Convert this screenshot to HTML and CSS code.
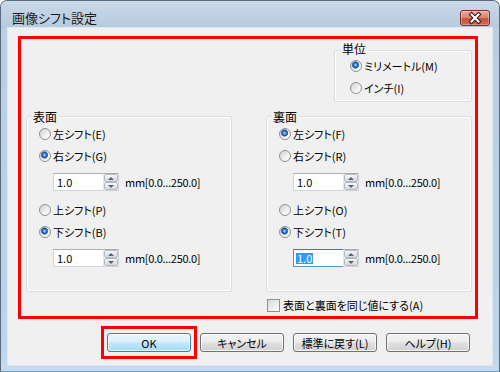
FILE: index.html
```html
<!DOCTYPE html>
<html lang="ja">
<head>
<meta charset="utf-8">
<link rel="stylesheet" href="styles.css">
</head>
<body>
<div class="window">
  <div class="titlebar">
    <span class="title">画像シフト設定</span>
    <span class="close">
      <svg width="28" height="14" viewBox="0 0 28 14">
        <path d="M10.5 3.5L17.5 10.5M17.5 3.5L10.5 10.5" stroke="#3b1b16" stroke-width="4.2" stroke-linecap="square" fill="none"/>
        <path d="M10.5 3.5L17.5 10.5M17.5 3.5L10.5 10.5" stroke="#ffffff" stroke-width="2" stroke-linecap="square" fill="none"/>
      </svg>
    </span>
  </div>
  <div class="client">
    <div class="highlight">
      <div class="group unit">
        <span class="gtitle">単位</span>
        <div class="row"><span class="radio on"></span><span>ミリメートル(M)</span></div>
        <div class="row"><span class="radio"></span><span>インチ(I)</span></div>
      </div>

      <div class="group side front">
        <span class="gtitle">表面</span>
        <div class="row"><span class="radio"></span><span>左シフト(E)</span></div>
        <div class="row"><span class="radio on"></span><span>右シフト(G)</span></div>
        <div class="spin-row">
          <div class="spin">
            <span class="spin-input">1.0</span>
            <span class="spin-btns"><span class="spin-btn"><span class="tri-up"></span></span><span class="spin-btn"><span class="tri-down"></span></span></span>
          </div>
          <span class="range">mm[0.0...250.0]</span>
        </div>
        <div class="row sep"><span class="radio"></span><span>上シフト(P)</span></div>
        <div class="row"><span class="radio on"></span><span>下シフト(B)</span></div>
        <div class="spin-row">
          <div class="spin">
            <span class="spin-input">1.0</span>
            <span class="spin-btns"><span class="spin-btn"><span class="tri-up"></span></span><span class="spin-btn"><span class="tri-down"></span></span></span>
          </div>
          <span class="range">mm[0.0...250.0]</span>
        </div>
      </div>

      <div class="group side back">
        <span class="gtitle">裏面</span>
        <div class="row"><span class="radio on"></span><span>左シフト(F)</span></div>
        <div class="row"><span class="radio"></span><span>右シフト(R)</span></div>
        <div class="spin-row">
          <div class="spin">
            <span class="spin-input">1.0</span>
            <span class="spin-btns"><span class="spin-btn"><span class="tri-up"></span></span><span class="spin-btn"><span class="tri-down"></span></span></span>
          </div>
          <span class="range">mm[0.0...250.0]</span>
        </div>
        <div class="row sep"><span class="radio"></span><span>上シフト(O)</span></div>
        <div class="row"><span class="radio on"></span><span>下シフト(T)</span></div>
        <div class="spin-row">
          <div class="spin">
            <span class="spin-input focus"><span class="sel">1.0</span></span>
            <span class="spin-btns"><span class="spin-btn"><span class="tri-up"></span></span><span class="spin-btn"><span class="tri-down"></span></span></span>
          </div>
          <span class="range">mm[0.0...250.0]</span>
        </div>
      </div>

      <div class="check-row"><span class="checkbox"></span><span>表面と裏面を同じ値にする(A)</span></div>
    </div>

    <div class="buttons">
      <div class="ok-frame"><span class="btn default">OK</span></div>
      <span class="btn">キャンセル</span>
      <span class="btn spaced">標準に戻す(L)</span>
      <span class="btn spaced">ヘルプ(H)</span>
    </div>
  </div>
</div>
</body>
</html>
```

FILE: styles.css
```css
html, body {
  margin: 0;
  padding: 0;
}
body {
  width: 500px;
  height: 372px;
  overflow: hidden;
  background: #ffffff;
  font-family: "Noto Sans CJK JP", "Noto Sans", sans-serif;
  font-size: 11px;
  line-height: 16px;
  font-feature-settings: "palt";
  color: #000;
}

.window {
  width: 500px;
  height: 372px;
  box-sizing: border-box;
  border: 1px solid #596a7d;
  border-bottom-color: #5fa6cf;
  border-radius: 7px 7px 0 0;
  background: linear-gradient(#c4d5e7, #b9cee4 40px, #bcd4ec 340px, #c3daf0);
  display: flex;
  flex-direction: column;
  overflow: hidden;
}

.titlebar {
  height: 27px;
  box-sizing: border-box;
  display: flex;
  align-items: flex-start;
  padding: 9px 9px 0 11px;
  background: linear-gradient(#cbd9e8, #b6cadf);
}
.title {
  font-size: 13px;
  line-height: 16px;
  color: #1b1b1b;
}
.close {
  margin-left: auto;
  width: 30px;
  height: 16px;
  box-sizing: border-box;
  border: 1px solid #7d2d24;
  border-radius: 3px;
  background: linear-gradient(#e8ab9d 0%, #d98a78 45%, #c5533f 55%, #cd6a55 100%);
  box-shadow: inset 0 0 0 1px rgba(255, 255, 255, 0.3);
  display: flex;
}
.close svg {
  display: block;
}

.client {
  flex: 1;
  margin: 0 7px 6px;
  background: #f0f0f0;
  padding: 8px 14px 0 10px;
  box-shadow: 0 0 0 1px #dfe7ef;
}

.highlight {
  border: 3px solid #ff0000;
  display: grid;
  grid-template-columns: 206px 206px;
  column-gap: 34px;
  padding: 11px 3px 0 5px;
}

.group {
  border: 1px solid #d5dfe5;
  border-radius: 3px;
  box-shadow: inset 0 0 0 1px #ffffff;
}
.gtitle {
  display: block;
  width: fit-content;
  margin: -8px 0 0 4px;
  padding: 0 2px;
  font-size: 12px;
  line-height: 12px;
  background: #f0f0f0;
}

.unit {
  grid-column: 2;
  justify-self: end;
  width: 138px;
  box-sizing: border-box;
  padding-bottom: 2px;
  margin-bottom: 14px;
}
.unit .gtitle {
  margin-left: 5px;
}
.unit .row {
  padding-left: 15px;
}

.side {
  padding: 2px 0 24px;
}
.front { grid-column: 1; }
.back { grid-column: 2; }

.row {
  display: flex;
  align-items: center;
  height: 22px;
  padding-left: 12px;
}
.row.sep {
  margin-top: 8px;
}

.radio {
  width: 12px;
  height: 12px;
  box-sizing: border-box;
  border-radius: 50%;
  border: 1px solid #8f8f8f;
  background: linear-gradient(135deg, #d2d2d2, #f6f6f6 70%, #ffffff);
  margin-right: 2px;
  flex: none;
}
.radio.on {
  background:
    radial-gradient(circle at 45% 40%, #bfe6ff 0, #3d8fdc 1.4px, #1c4f9a 2.8px, #4f86c8 3.4px, rgba(255,255,255,0) 3.9px),
    linear-gradient(135deg, #d2d2d2, #f6f6f6 70%, #ffffff);
}

.spin-row {
  display: flex;
  align-items: center;
  height: 18px;
  margin-top: 6px;
  padding-left: 26px;
}
.spin {
  display: flex;
  height: 18px;
}
.spin-input {
  width: 50px;
  height: 18px;
  box-sizing: border-box;
  background: #ffffff;
  border: 1px solid #d0d3d9;
  border-top-color: #abadb3;
  border-right: none;
  padding-left: 3px;
  line-height: 16px;
  display: flex;
  align-items: center;
}
.spin-input.focus {
  border-color: #5593c9;
  border-top-color: #3d7bad;
}
.sel {
  background: #3399ff;
  color: #ffffff;
  line-height: 11px;
  padding: 0 1px;
  margin-left: -1px;
}
.spin-btns {
  width: 16px;
  height: 18px;
  box-sizing: border-box;
  border: 1px solid #d0d3d9;
  border-top-color: #abadb3;
  border-left: 1px solid #e4e4e4;
  background: #ffffff;
  display: flex;
  flex-direction: column;
  padding: 0;
}
.spin-btn {
  flex: 1;
  border: 1px solid #b5b8c0;
  border-radius: 2px;
  background: linear-gradient(#f8f8f8, #e6e6e6 50%, #d9dbe0);
  display: flex;
  align-items: center;
  justify-content: center;
}
.tri-up {
  width: 0;
  height: 0;
  border-left: 3px solid transparent;
  border-right: 3px solid transparent;
  border-bottom: 3px solid #4d6488;
}
.tri-down {
  width: 0;
  height: 0;
  border-left: 3px solid transparent;
  border-right: 3px solid transparent;
  border-top: 3px solid #4d6488;
}
.range {
  margin-left: 6px;
  letter-spacing: -0.3px;
}

.check-row {
  grid-column: 2;
  display: flex;
  align-items: center;
  height: 22px;
  margin-top: 2px;
}
.checkbox {
  width: 13px;
  height: 13px;
  box-sizing: border-box;
  border: 1px solid #8f8f8f;
  background: linear-gradient(135deg, #d6d6d6, #f4f4f4 70%, #ffffff);
  margin: 0 3px 0 1px;
  flex: none;
}

.buttons {
  display: flex;
  align-items: center;
  margin-top: 7px;
  padding-left: 83px;
}
.ok-frame {
  border: 3px solid #ff0000;
  padding: 4px 3px;
  margin-right: 3px;
  display: flex;
}
.btn {
  width: 84px;
  height: 19px;
  box-sizing: border-box;
  border: 1px solid #707070;
  border-radius: 3px;
  background: linear-gradient(#f4f4f4 0%, #ececec 45%, #dedede 55%, #d2d2d2 100%);
  box-shadow: inset 0 0 0 1px rgba(255, 255, 255, 0.75);
  display: flex;
  align-items: center;
  justify-content: center;
  line-height: 16px;
}
.btn.spaced {
  margin-left: 9px;
}
.btn.default {
  border-color: #3c7fb1;
  background: linear-gradient(#eaf6fd 0%, #d9f0fc 45%, #bee6fd 55%, #a9dbf6 100%);
}
```
